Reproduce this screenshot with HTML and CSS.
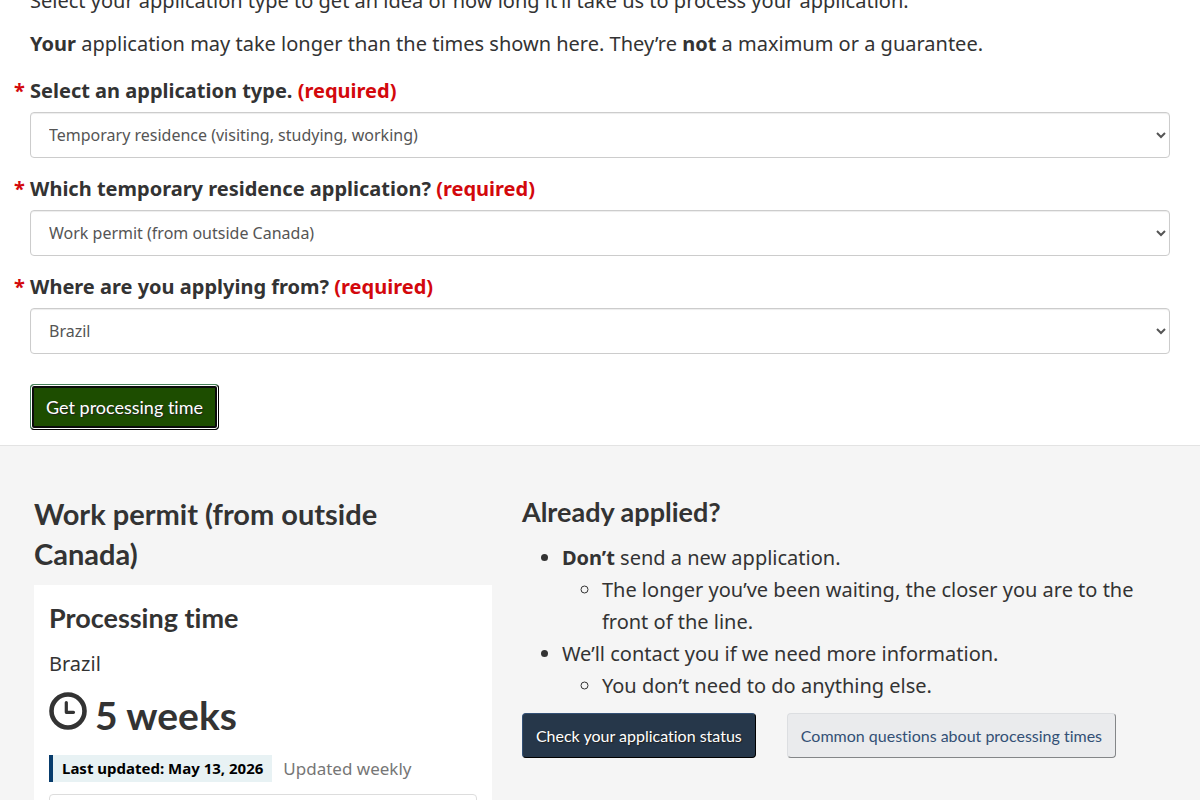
FILE: index.html
```html
<!DOCTYPE html>
<html lang="en">
<head>
    <meta charset="UTF-8">
    <meta name="viewport" content="width=device-width, initial-scale=1.0">
    <title>Check processing times</title>
    <link rel="stylesheet" href="styles.css">
</head>
<body>
    <main>
        <form class="container">
            <p>Select your application type to get an idea of how long it’ll take us to process your application.</p>
            <p class="notice"><strong>Your</strong> application may take longer than the times shown here. They’re <strong>not</strong> a maximum or a guarantee.</p>

            <div class="form-group">
                <label for="appType" class="required">Select an application type. <span>(required)</span></label>
                <select id="appType" class="form-control">
                    <option>Temporary residence (visiting, studying, working)</option>
                </select>
            </div>
            <div class="form-group">
                <label for="tempType" class="required">Which temporary residence application? <span>(required)</span></label>
                <select id="tempType" class="form-control">
                    <option>Work permit (from outside Canada)</option>
                </select>
            </div>
            <div class="form-group">
                <label for="country" class="required">Where are you applying from? <span>(required)</span></label>
                <select id="country" class="form-control">
                    <option>Brazil</option>
                </select>
            </div>
            <button type="button" class="btn btn-submit">Get processing time</button>
        </form>

        <section class="results">
            <div class="col">
                <h2>Work permit (from outside Canada)</h2>
                <div class="card">
                    <h3>Processing time</h3>
                    <p>Brazil</p>
                    <div class="time">
                        <svg class="clock" viewBox="0 0 38 38" aria-hidden="true">
                            <circle cx="19" cy="19" r="16.5" fill="none" stroke="currentColor" stroke-width="4.6"/>
                            <path d="M17.300 10.500v9.800h7.200" fill="none" stroke="currentColor" stroke-width="3.2" stroke-linecap="round" stroke-linejoin="round"/>
                        </svg>
                        <strong>5 weeks</strong>
                    </div>
                    <div class="updated">
                        <span class="label-info">Last updated: May 13, 2026</span>
                        <span class="frequency">Updated weekly</span>
                    </div>
                    <div class="details"></div>
                </div>
            </div>

            <div class="col">
                <h3>Already applied?</h3>
                <ul>
                    <li><strong>Don’t</strong> send a new application.
                        <ul>
                            <li>The longer you’ve been waiting, the closer you are to the front of the line.</li>
                        </ul>
                    </li>
                    <li>We’ll contact you if we need more information.
                        <ul>
                            <li>You don’t need to do anything else.</li>
                        </ul>
                    </li>
                </ul>
                <div class="actions">
                    <a href="#" class="btn btn-primary">Check your application status</a>
                    <a href="#" class="btn btn-default">Common questions about processing times</a>
                </div>
            </div>
        </section>
    </main>
</body>
</html>
```
FILE: styles.css
```css
* {
    box-sizing: border-box;
}

html {
    overflow: hidden;
}

body {
    margin: 0;
    background: #fff;
    color: #333;
    font-family: "Noto Sans", sans-serif;
    font-size: 20px;
    font-variant-ligatures: none;
    line-height: 32px;
}

main {
    margin-top: -15px;
}

p {
    margin: 0 0 11px;
}

h2, h3 {
    margin: 0;
    font-family: Lato, sans-serif;
    font-weight: 700;
}

h2 {
    padding-right: 30px;
    font-size: 29px;
    line-height: 40px;
}

h3 {
    font-size: 27px;
    line-height: 36px;
}

.container {
    padding: 0 30px 15px;
}

.notice {
    margin-bottom: 15px;
}

.form-group {
    margin-bottom: 15px;
}

label {
    display: block;
    margin-bottom: 5px;
    font-weight: 700;
}

label span {
    color: #d3080c;
}

.required::before {
    content: "* ";
    margin-left: -16px;
    color: #d3080c;
}

.form-control {
    display: block;
    width: 100%;
    height: 46px;
    padding: 6px 14px;
    background: #fff;
    border: 1px solid #ccc;
    border-radius: 4px;
    box-shadow: inset 0 1px 1px rgba(0, 0, 0, 0.075);
    color: #555;
    font-family: inherit;
    font-size: 16px;
}

.btn {
    display: inline-block;
    padding: 10px 13px;
    border: 1px solid;
    border-radius: 4px;
    font-family: Lato, sans-serif;
    font-size: 16px;
    font-variant-ligatures: none;
    line-height: 23px;
    text-decoration: none;
}

.btn-submit {
    height: 46px;
    margin-top: 15px;
    padding: 9px 15px;
    background: #1d4d00;
    border-color: #458259 #000 #000 #458259;
    box-shadow: inset 0 0 0 1px #fff, inset 0 0 0 3px #0b0b0b;
    color: #fff;
    font-size: 18px;
    text-shadow: 1px 1px 1px #222;
}

.btn-primary {
    background: #26374a;
    border-color: #335075 #000 #000 #335075;
    color: #fff;
    text-shadow: 1px 1px 1px #222;
}

.btn-default {
    background: #eaebed;
    border-color: #dcdee1 #848688 #848688 #dcdee1;
    color: #335075;
}

.results {
    display: grid;
    grid-template-columns: 5fr 7fr;
    padding: 48px 10px 0 19px;
    background: #f5f5f5;
    border-top: 1px solid #e3e3e3;
}

.col {
    padding: 0 15px;
}

.card {
    margin-top: 11px;
    padding: 15px;
    background: #fff;
}

.card h3 {
    margin-bottom: 12px;
}

.card p {
    margin-bottom: 8px;
}

.time {
    display: flex;
    gap: 8px;
    height: 56px;
    font-family: Lato, sans-serif;
    font-size: 39px;
    line-height: 54px;
}

.clock {
    width: 38px;
    height: 38px;
    margin-top: 4px;
}

.updated {
    display: flex;
    align-items: center;
    gap: 11px;
    margin-top: 11px;
}

.label-info {
    padding: 0 9px;
    background: #e8f2f4;
    border-left: 4px solid #083c6c;
    color: #000;
    font-size: 15px;
    font-weight: 700;
    line-height: 27px;
}

.frequency {
    color: #767676;
    font-size: 17px;
    line-height: 27px;
}

.details {
    height: 60px;
    margin-top: 12px;
    border: 1px solid #ddd;
    border-radius: 4px;
}

ul {
    margin: 0;
    padding-left: 40px;
}

.col > ul {
    margin: 12px 0 11px;
}

.actions {
    display: flex;
    flex-wrap: wrap;
    gap: 31px;
}
```
